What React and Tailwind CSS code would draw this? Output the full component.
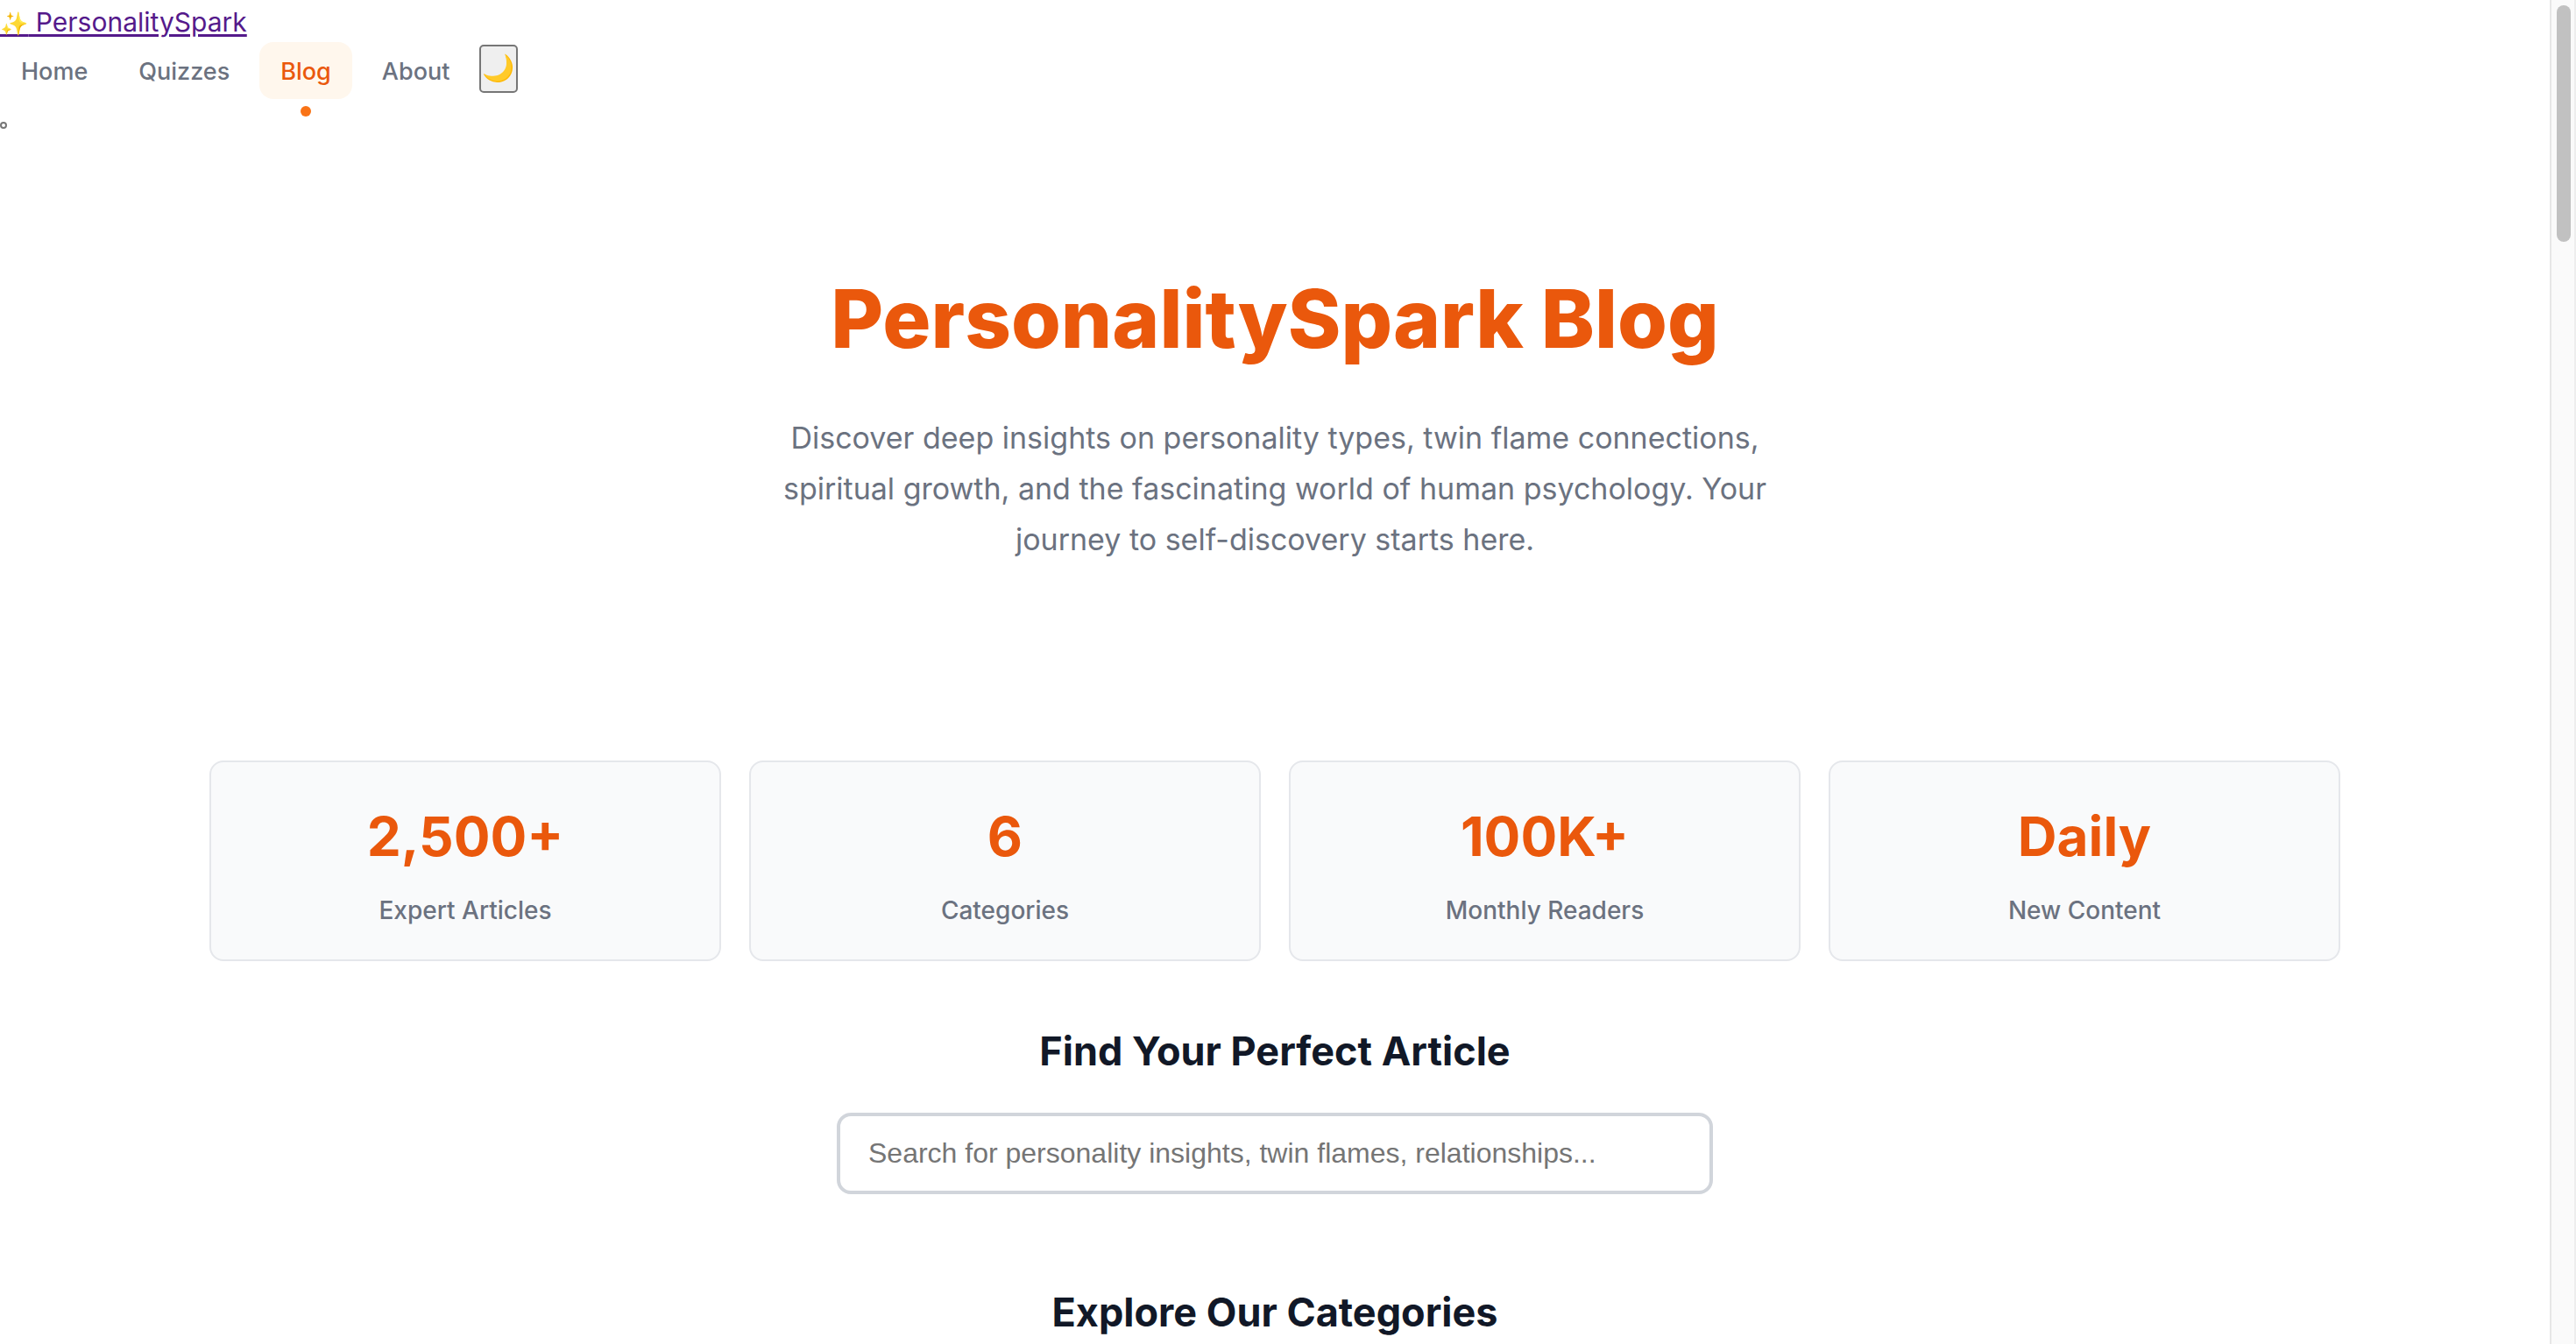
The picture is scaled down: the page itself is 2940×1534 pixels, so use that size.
const navLinks = [
  { label: "Home" },
  { label: "Quizzes" },
  { label: "Blog", active: true },
  { label: "About" },
];

const stats = [
  { value: "2,500+", label: "Expert Articles" },
  { value: "6", label: "Categories" },
  { value: "100K+", label: "Monthly Readers" },
  { value: "Daily", label: "New Content" },
];

function NavLink({ label, active }) {
  return (
    <li className="relative">
      <a
        href="#"
        aria-current={active ? "page" : undefined}
        className={
          active
            ? "block h-[65px] rounded-2xl bg-[#fff7ed] px-6 text-[27px] leading-[67px] font-medium text-[#ea580c]"
            : "block h-[65px] rounded-2xl px-6 text-[27px] leading-[67px] font-medium text-[#6b7280]"
        }
      >
        {label}
      </a>
      {active && (
        <span className="absolute -bottom-5 left-1/2 size-3 -translate-x-1/2 rounded-full bg-[#f97316]" />
      )}
    </li>
  );
}

function Header() {
  return (
    <header className="flex flex-col items-start">
      <a
        href="#"
        className="flex h-12 text-[30px] leading-[50px] whitespace-pre text-[#551a8b] underline decoration-[3px] underline-offset-[3px]"
      >
        <span>
          <span className="text-[26px]">✨</span> PersonalitySpark
        </span>
      </a>
      <nav className="flex items-start gap-[10px]">
        <ul className="flex gap-[10px]">
          {navLinks.map((link) => (
            <NavLink key={link.label} {...link} />
          ))}
        </ul>
        <button
          type="button"
          aria-label="Toggle dark mode"
          className="mt-[3px] flex h-[55px] w-11 items-center justify-center rounded-[5px] border-2 border-[#767676] bg-[#efefef] pb-1 text-[30px] leading-none"
        >
          🌙
        </button>
      </nav>
      <button
        type="button"
        aria-label="Open menu"
        className="mt-[26px] size-2 rounded-full border-2 border-[#767676]"
      />
    </header>
  );
}

function Scrollbar() {
  return (
    <div className="flex w-[30px] shrink-0 justify-center border-x-2 border-l-[#e7e7e7] border-r-[#ededed] bg-[#fafafa] pt-1.5 pl-0.5">
      <div className="h-[270px] w-4 rounded-full bg-[#c1c1c1]" />
    </div>
  );
}

export default function App() {
  return (
    <div
      className="flex min-h-screen bg-white"
      style={{ fontFamily: 'Inter, "Noto Color Emoji", sans-serif' }}
    >
      <div className="min-w-0 flex-1">
        <Header />
        <main className="flex flex-col items-center text-center">
          <section className="flex flex-col items-center pt-[159px]">
            <h1 className="text-[92px] leading-[116px] font-extrabold text-[#ea580c]">
              PersonalitySpark Blog
            </h1>
            <p className="mt-[49px] max-w-[1200px] text-[34px] leading-[58px] text-[#6b7280]">
              Discover deep insights on personality types, twin flame connections, spiritual growth,
              and the fascinating world of human psychology. Your journey to self-discovery starts
              here.
            </p>
          </section>

          <section className="mt-[223px] grid w-full max-w-[2432px] grid-cols-4 gap-8">
            {stats.map(({ value, label }) => (
              <div
                key={label}
                className="rounded-2xl border-2 border-[#e5e7eb] bg-[#f9fafb] pt-12 pb-[31px]"
              >
                <div className="text-[62px] leading-[74px] font-bold text-[#ea580c]">{value}</div>
                <div className="mt-[22px] text-[28px] leading-[50px] font-medium text-[#6b7280]">
                  {label}
                </div>
              </div>
            ))}
          </section>

          <section className="mt-[74px] flex w-full flex-col items-center">
            <h2 className="text-[45px] leading-[58px] font-bold text-[#111827]">
              <label htmlFor="search">Find Your Perfect Article</label>
            </h2>
            <input
              id="search"
              type="text"
              placeholder="Search for personality insights, twin flames, relationships..."
              className="mt-[41px] h-[93px] w-full max-w-[1000px] rounded-2xl border-4 border-[#d1d5db] bg-white px-8 font-['Liberation_Sans',Arial,sans-serif] text-[32px] text-[#111827] placeholder:text-[#757575]"
            />
          </section>

          <section className="mt-[106px]">
            <h2 className="text-[45px] leading-[58px] font-bold text-[#111827]">
              Explore Our Categories
            </h2>
          </section>
        </main>
      </div>
      <Scrollbar />
    </div>
  );
}
